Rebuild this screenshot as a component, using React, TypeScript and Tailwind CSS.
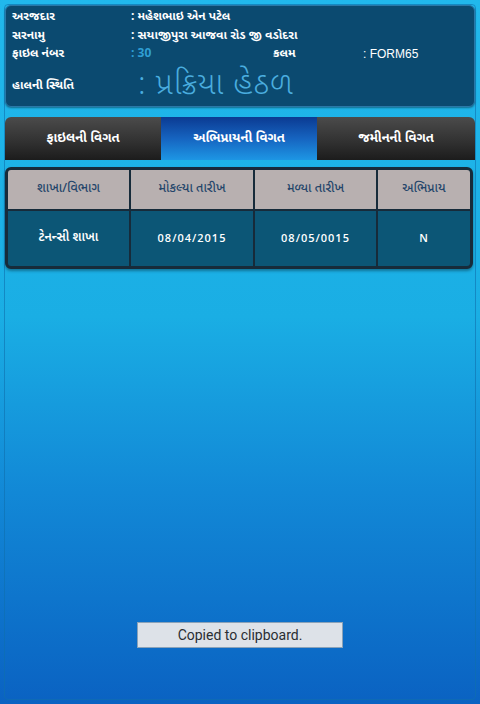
import React from 'react';

const guj = { fontFamily: '"Noto Sans Gujarati", "Lohit Gujarati", "Noto Sans", "DejaVu Sans", sans-serif' };

const rows = [
  { label: 'અરજદાર', value: ': મહેશભાઇ એન પટેલ' },
  { label: 'સરનામુ', value: ': સયાજીપુરા આજવા રોડ જી વડોદરા' },
];

const tabs = [
  { name: 'ફાઇલની વિગત', active: false },
  { name: 'અભિપ્રાયની વિગત', active: true },
  { name: 'જમીનની વિગત', active: false },
];

const cols = ['શાખા/વિભાગ', 'મોકલ્યા તારીખ', 'મળ્યા તારીખ', 'અભિપ્રાય'];
const data = ['ટેનન્સી શાખા', '08/04/2015', '08/05/0015', 'N'];
const widths = ['w-[121px]', 'w-[122px]', 'w-[121px]', 'flex-1'];

export default function App() {
  return (
    <div
      className="relative w-[480px] h-[704px] overflow-hidden bg-[linear-gradient(180deg,#21b8ec_0%,#1aaee4_45%,#1288d6_70%,#0a62c2_100%)] p-[4px]"
      style={guj}
    >
      <div className="h-full rounded-[4px] border border-[#0f6fae]/60">
        {/* Header panel */}
        <div className="rounded-[6px] bg-[#0b4a70] border border-[#2a78a8] px-[6px] pt-[1px] pb-[1px] shadow-[0_1px_2px_rgba(0,0,0,0.4)]">
          {rows.map((r) => (
            <div key={r.label} className="flex h-[19px] items-center text-[12px] font-bold text-white">
              <span className="w-[119px]">{r.label}</span>
              <span>{r.value}</span>
            </div>
          ))}
          <div className="flex h-[18px] items-center text-[12px] font-bold text-white">
            <span className="w-[119px]">ફાઇલ નંબર</span>
            <span className="w-[142px] text-[#2f9fd4]">: 30</span>
            <span className="w-[90px]">કલમ</span>
            <span className="font-normal" style={{ fontFamily: '"Liberation Sans", Arial, sans-serif' }}>: FORM65</span>
          </div>
          <div className="mt-[4px] flex h-[38px] items-center">
            <span className="w-[126px] text-[12px] font-bold text-white">હાલની સ્થિતિ</span>
            <span className="text-[31px] font-light tracking-[1px] text-[#4aaddf] leading-none">: પ્રક્રિયા હેઠળ</span>
          </div>
        </div>

        {/* Tabs */}
        <div className="mt-[10px] flex">
          {tabs.map((t, i) => (
            <div
              key={t.name}
              className={
                t.active
                  ? 'flex h-[43px] w-[156px] items-center justify-center bg-[linear-gradient(180deg,#0b3a92_0%,#1664c0_50%,#1d96e4_100%)] text-[13px] font-bold text-white'
                  : i === 0
                  ? 'flex h-[43px] w-[156px] items-center justify-center rounded-tl-[6px] bg-[linear-gradient(180deg,#4b4b4b_0%,#303030_60%,#1c1c1c_100%)] text-[13px] font-bold text-white'
                  : 'flex h-[43px] flex-1 items-center justify-center rounded-tr-[6px] bg-[linear-gradient(180deg,#4b4b4b_0%,#303030_60%,#1c1c1c_100%)] text-[13px] font-bold text-white'
              }
            >
              {t.name}
            </div>
          ))}
        </div>

        {/* Table */}
        <div className="mt-[7px] mr-[2px] overflow-hidden rounded-[6px] border-[3px] border-[#172b3a] bg-[#172b3a] shadow-[0_2px_3px_rgba(0,0,0,0.35)]">
          <div className="flex h-[39px] gap-[2px]">
            {cols.map((c, i) => (
              <div
                key={c}
                className={`${widths[i]} flex items-center justify-center bg-[#b8b0b0] text-[12.5px] font-medium text-[#24456a]`}
              >
                {c}
              </div>
            ))}
          </div>
          <div className="mt-[2px] flex h-[55px] gap-[2px]">
            {data.map((d, i) => (
              <div
                key={i}
                className={`${widths[i]} flex items-center justify-center bg-[#0c5676] font-semibold text-white ${i === 0 ? 'text-[12.5px]' : 'text-[11px]'}`}
                style={i > 0 ? { fontFamily: '"Open Sans", "DejaVu Sans", sans-serif', letterSpacing: '1px' } : undefined}
              >
                {d}
              </div>
            ))}
          </div>
        </div>
      </div>

      {/* Toast */}
      <div className="absolute left-[137px] top-[622px] flex h-[26px] w-[206px] items-center justify-center border border-[#8aa2b8] bg-[#dde2e8] text-[14px] text-[#2a2e33]" style={{ fontFamily: 'Roboto, sans-serif' }}>
        Copied to clipboard.
      </div>
    </div>
  );
}
